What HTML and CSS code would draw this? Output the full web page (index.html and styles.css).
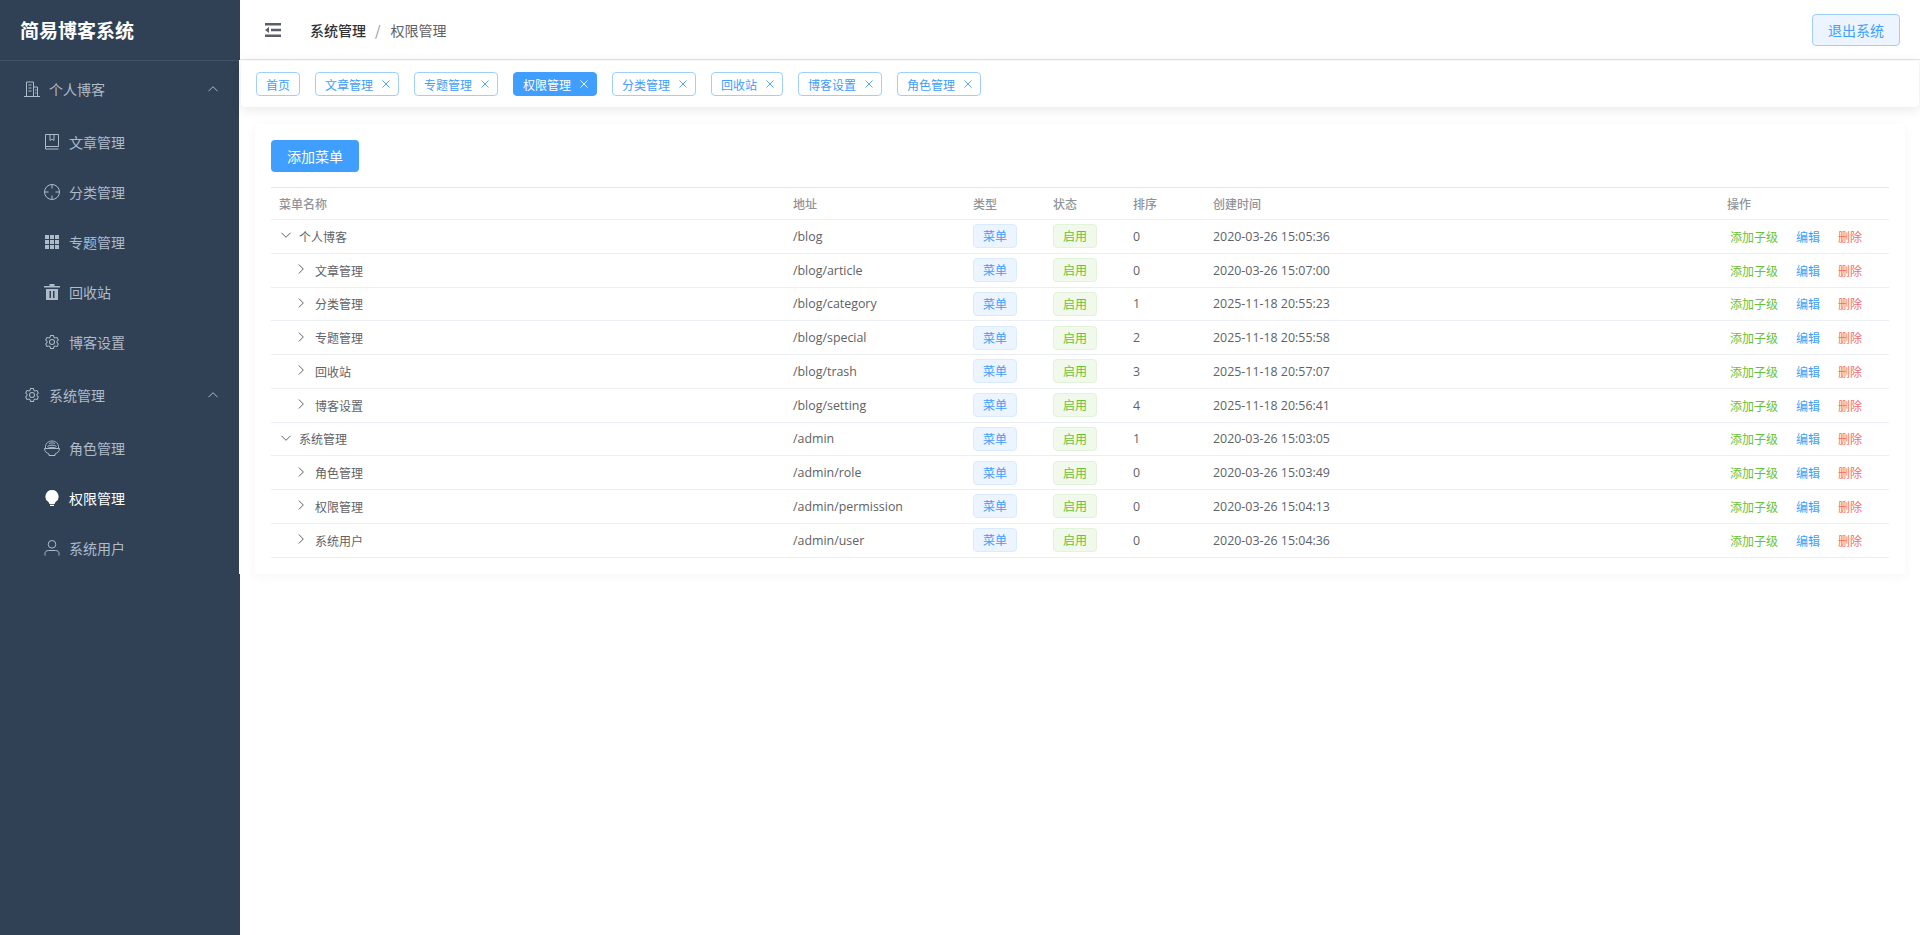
FILE: index.html
```html
<!DOCTYPE html>
<html lang="zh-CN">
<head>
  <meta charset="UTF-8">
  <meta name="viewport" content="width=device-width, initial-scale=1.0">
  <title>简易博客系统</title>
  <link rel="stylesheet" href="styles.css">
</head>
<body>
  <svg class="icon-defs" xmlns="http://www.w3.org/2000/svg">
    <symbol id="i-building" viewBox="0 0 16 16">
      <path d="M0 15.500h16M2.500 15.500V1h7v14.500M9.500 6h4v9.500M4.500 4h3M4.500 7h3M4.500 10h3M11 9h1.500M11 12h1.500" fill="none" stroke="currentColor"/>
    </symbol>
    <symbol id="i-book" viewBox="0 0 16 16">
      <path d="M1.500 12.500V.5h13v12h-13zM1.500 15h13M1.500 12.500V15M6 .5v6l2-1.500 2 1.500v-6" fill="none" stroke="currentColor"/>
    </symbol>
    <symbol id="i-aim" viewBox="0 0 16 16">
      <path d="M8 .5a7.500 7.500 0 1 0 0 15 7.500 7.500 0 0 0 0-15zM8 .5v4M8 11.500v4M.5 8h4M11.500 8h4" fill="none" stroke="currentColor"/>
    </symbol>
    <symbol id="i-grid" viewBox="0 0 16 16">
      <path d="M1 1h4v4H1zM6 1h4v4H6zM11 1h4v4h-4zM1 6h4v4H1zM6 6h4v4H6zM11 6h4v4h-4zM1 11h4v4H1zM6 11h4v4H6zM11 11h4v4h-4z" fill="currentColor"/>
    </symbol>
    <symbol id="i-trash" viewBox="0 0 16 16">
      <path fill-rule="evenodd" d="M5.500 0h5v2H16v1.500H0V2h5.500zM2 5h12v11H2zM5.500 7v7H7V7zM9 7v7h1.500V7z" fill="currentColor"/>
    </symbol>
    <symbol id="i-setting" viewBox="0 0 1024 1024">
      <path d="M600.704 64a32 32 0 0 1 30.464 22.208l35.2 109.376c14.784 7.232 28.928 15.36 42.432 24.512l112.384-24.192a32 32 0 0 1 34.432 15.36L944.32 364.8a32 32 0 0 1-4.032 37.504l-77.12 85.12a357.12 357.12 0 0 1 0 49.024l77.12 85.248a32 32 0 0 1 4.032 37.504l-88.704 153.6a32 32 0 0 1-34.432 15.296L708.8 803.904c-13.44 9.088-27.648 17.28-42.368 24.512l-35.264 109.376A32 32 0 0 1 600.704 960H423.296a32 32 0 0 1-30.464-22.208L357.696 828.48a351.616 351.616 0 0 1-42.56-24.64l-112.32 24.256a32 32 0 0 1-34.432-15.36L79.68 659.2a32 32 0 0 1 4.032-37.504l77.12-85.248a357.12 357.12 0 0 1 0-48.896l-77.12-85.248A32 32 0 0 1 79.68 364.8l88.704-153.6a32 32 0 0 1 34.432-15.296l112.32 24.256c13.568-9.152 27.776-17.408 42.56-24.64l35.2-109.312A32 32 0 0 1 423.232 64H600.64zm-23.424 64H446.720l-36.352 113.088-24.512 11.968a294.113 294.113 0 0 0-34.816 20.096l-22.656 15.360-116.224-25.088-65.280 113.152 79.680 88.192-1.920 27.136a293.120 293.120 0 0 0 0 40.192l1.920 27.136-79.808 88.192 65.344 113.152 116.224-25.024 22.656 15.296a294.113 294.113 0 0 0 34.816 20.096l24.512 11.968L446.720 896h130.688l36.480-113.152 24.448-11.904a288.282 288.282 0 0 0 34.752-20.096l22.592-15.296 116.288 25.024 65.280-113.152-79.744-88.192 1.920-27.136a293.120 293.120 0 0 0 0-40.256l-1.920-27.136 79.808-88.128-65.344-113.152-116.288 24.960-22.592-15.232a287.616 287.616 0 0 0-34.752-20.096l-24.448-11.904L577.344 128zM512 320a192 192 0 1 1 0 384 192 192 0 0 1 0-384zm0 64a128 128 0 1 0 0 256 128 128 0 0 0 0-256z" fill="currentColor"/>
    </symbol>
    <symbol id="i-bowl" viewBox="0 0 16 16">
      <path d="M.5 8.500h15c0 2.500-1.800 4.500-4.500 5.500v1.500H5V14C2.300 13 .5 11 .5 8.500zM1.500 8.500V6.500C1.500 3.500 4.500 1 8 1s6.500 2.500 6.500 5.500v2M3.500 6.500c1.500-1.800 7.500-1.800 9 0M3.500 8.500c1.500-1.500 7.500-1.500 9 0M5 3.500c1.500-.8 4.500-.8 6 0" fill="none" stroke="currentColor"/>
    </symbol>
    <symbol id="i-bulb" viewBox="0 0 16 16">
      <path d="M8 0a6.500 6.500 0 0 1 3.500 12L10.500 14h-5l-1-2A6.500 6.500 0 0 1 8 0zM6 14.800h4V16H6z" fill="currentColor"/>
    </symbol>
    <symbol id="i-user" viewBox="0 0 16 16">
      <path d="M8 .5a3.800 3.800 0 1 0 0 7.600A3.800 3.800 0 0 0 8 .5zM1 15.500v-2c0-2 1.500-3 3.500-3h7c2 0 3.500 1 3.500 3v2" fill="none" stroke="currentColor"/>
    </symbol>
    <symbol id="i-fold" viewBox="0 0 16 14">
      <path d="M0 0h16v2.500H0zM6 5.750h10v2.500H6zM0 11.500h16V14H0zM4 4v6L0 7z" fill="currentColor"/>
    </symbol>
    <symbol id="i-up" viewBox="0 0 12 12">
      <path d="M1.500 8.200 6 3.700l4.500 4.500" fill="none" stroke="currentColor"/>
    </symbol>
    <symbol id="i-down" viewBox="0 0 12 12">
      <path d="M1.500 3.800 6 8.300l4.500-4.500" fill="none" stroke="currentColor"/>
    </symbol>
    <symbol id="i-right" viewBox="0 0 12 12">
      <path d="M3.800 1.500 8.300 6l-4.500 4.500" fill="none" stroke="currentColor"/>
    </symbol>
    <symbol id="i-close" viewBox="0 0 10 10">
      <path d="M1.500 1.500l7 7M8.500 1.500l-7 7" fill="none" stroke="currentColor" stroke-width=".9"/>
    </symbol>
  </svg>

  <div class="layout">
    <aside class="sidebar">
      <div class="logo">简易博客系统</div>
      <nav class="menu">
        <div class="menu-title">
          <svg class="menu-icon"><use href="#i-building"/></svg>
          <span>个人博客</span>
          <svg class="menu-arrow"><use href="#i-up"/></svg>
        </div>
        <a class="menu-item"><svg class="menu-icon"><use href="#i-book"/></svg><span>文章管理</span></a>
        <a class="menu-item"><svg class="menu-icon"><use href="#i-aim"/></svg><span>分类管理</span></a>
        <a class="menu-item"><svg class="menu-icon"><use href="#i-grid"/></svg><span>专题管理</span></a>
        <a class="menu-item"><svg class="menu-icon"><use href="#i-trash"/></svg><span>回收站</span></a>
        <a class="menu-item"><svg class="menu-icon"><use href="#i-setting"/></svg><span>博客设置</span></a>
        <div class="menu-title">
          <svg class="menu-icon"><use href="#i-setting"/></svg>
          <span>系统管理</span>
          <svg class="menu-arrow"><use href="#i-up"/></svg>
        </div>
        <a class="menu-item"><svg class="menu-icon"><use href="#i-bowl"/></svg><span>角色管理</span></a>
        <a class="menu-item active"><svg class="menu-icon"><use href="#i-bulb"/></svg><span>权限管理</span></a>
        <a class="menu-item"><svg class="menu-icon"><use href="#i-user"/></svg><span>系统用户</span></a>
      </nav>
    </aside>

    <div class="main">
      <header class="navbar">
        <svg class="fold-icon"><use href="#i-fold"/></svg>
        <div class="breadcrumb">
          <span class="crumb-parent">系统管理</span>
          <span class="crumb-sep">/</span>
          <span class="crumb-current">权限管理</span>
        </div>
        <button class="logout-button">退出系统</button>
      </header>

      <div class="main-body">
        <div class="tabs">
          <span class="tab">首页</span>
          <span class="tab">文章管理<svg class="tab-close"><use href="#i-close"/></svg></span>
          <span class="tab">专题管理<svg class="tab-close"><use href="#i-close"/></svg></span>
          <span class="tab active">权限管理<svg class="tab-close"><use href="#i-close"/></svg></span>
          <span class="tab">分类管理<svg class="tab-close"><use href="#i-close"/></svg></span>
          <span class="tab">回收站<svg class="tab-close"><use href="#i-close"/></svg></span>
          <span class="tab">博客设置<svg class="tab-close"><use href="#i-close"/></svg></span>
          <span class="tab">角色管理<svg class="tab-close"><use href="#i-close"/></svg></span>
        </div>

        <section class="card">
          <button class="add-button">添加菜单</button>
          <table class="menu-table">
            <thead>
              <tr>
                <th class="col-name">菜单名称</th>
                <th class="col-path">地址</th>
                <th class="col-type">类型</th>
                <th class="col-status">状态</th>
                <th class="col-sort">排序</th>
                <th class="col-time">创建时间</th>
                <th class="col-ops">操作</th>
              </tr>
            </thead>
            <tbody>
              <tr>
                <td><div class="tree-cell"><svg class="tree-arrow"><use href="#i-down"/></svg>个人博客</div></td>
                <td class="latin">/blog</td>
                <td><span class="tag">菜单</span></td>
                <td><span class="tag green">启用</span></td>
                <td class="latin">0</td>
                <td class="latin">2020-03-26 15:05:36</td>
                <td><div class="ops"><a class="op-add">添加子级</a><a class="op-edit">编辑</a><a class="op-del">删除</a></div></td>
              </tr>
              <tr>
                <td><div class="tree-cell child"><svg class="tree-arrow"><use href="#i-right"/></svg>文章管理</div></td>
                <td class="latin">/blog/article</td>
                <td><span class="tag">菜单</span></td>
                <td><span class="tag green">启用</span></td>
                <td class="latin">0</td>
                <td class="latin">2020-03-26 15:07:00</td>
                <td><div class="ops"><a class="op-add">添加子级</a><a class="op-edit">编辑</a><a class="op-del">删除</a></div></td>
              </tr>
              <tr>
                <td><div class="tree-cell child"><svg class="tree-arrow"><use href="#i-right"/></svg>分类管理</div></td>
                <td class="latin">/blog/category</td>
                <td><span class="tag">菜单</span></td>
                <td><span class="tag green">启用</span></td>
                <td class="latin">1</td>
                <td class="latin">2025-11-18 20:55:23</td>
                <td><div class="ops"><a class="op-add">添加子级</a><a class="op-edit">编辑</a><a class="op-del">删除</a></div></td>
              </tr>
              <tr>
                <td><div class="tree-cell child"><svg class="tree-arrow"><use href="#i-right"/></svg>专题管理</div></td>
                <td class="latin">/blog/special</td>
                <td><span class="tag">菜单</span></td>
                <td><span class="tag green">启用</span></td>
                <td class="latin">2</td>
                <td class="latin">2025-11-18 20:55:58</td>
                <td><div class="ops"><a class="op-add">添加子级</a><a class="op-edit">编辑</a><a class="op-del">删除</a></div></td>
              </tr>
              <tr>
                <td><div class="tree-cell child"><svg class="tree-arrow"><use href="#i-right"/></svg>回收站</div></td>
                <td class="latin">/blog/trash</td>
                <td><span class="tag">菜单</span></td>
                <td><span class="tag green">启用</span></td>
                <td class="latin">3</td>
                <td class="latin">2025-11-18 20:57:07</td>
                <td><div class="ops"><a class="op-add">添加子级</a><a class="op-edit">编辑</a><a class="op-del">删除</a></div></td>
              </tr>
              <tr>
                <td><div class="tree-cell child"><svg class="tree-arrow"><use href="#i-right"/></svg>博客设置</div></td>
                <td class="latin">/blog/setting</td>
                <td><span class="tag">菜单</span></td>
                <td><span class="tag green">启用</span></td>
                <td class="latin">4</td>
                <td class="latin">2025-11-18 20:56:41</td>
                <td><div class="ops"><a class="op-add">添加子级</a><a class="op-edit">编辑</a><a class="op-del">删除</a></div></td>
              </tr>
              <tr>
                <td><div class="tree-cell"><svg class="tree-arrow"><use href="#i-down"/></svg>系统管理</div></td>
                <td class="latin">/admin</td>
                <td><span class="tag">菜单</span></td>
                <td><span class="tag green">启用</span></td>
                <td class="latin">1</td>
                <td class="latin">2020-03-26 15:03:05</td>
                <td><div class="ops"><a class="op-add">添加子级</a><a class="op-edit">编辑</a><a class="op-del">删除</a></div></td>
              </tr>
              <tr>
                <td><div class="tree-cell child"><svg class="tree-arrow"><use href="#i-right"/></svg>角色管理</div></td>
                <td class="latin">/admin/role</td>
                <td><span class="tag">菜单</span></td>
                <td><span class="tag green">启用</span></td>
                <td class="latin">0</td>
                <td class="latin">2020-03-26 15:03:49</td>
                <td><div class="ops"><a class="op-add">添加子级</a><a class="op-edit">编辑</a><a class="op-del">删除</a></div></td>
              </tr>
              <tr>
                <td><div class="tree-cell child"><svg class="tree-arrow"><use href="#i-right"/></svg>权限管理</div></td>
                <td class="latin">/admin/permission</td>
                <td><span class="tag">菜单</span></td>
                <td><span class="tag green">启用</span></td>
                <td class="latin">0</td>
                <td class="latin">2020-03-26 15:04:13</td>
                <td><div class="ops"><a class="op-add">添加子级</a><a class="op-edit">编辑</a><a class="op-del">删除</a></div></td>
              </tr>
              <tr>
                <td><div class="tree-cell child"><svg class="tree-arrow"><use href="#i-right"/></svg>系统用户</div></td>
                <td class="latin">/admin/user</td>
                <td><span class="tag">菜单</span></td>
                <td><span class="tag green">启用</span></td>
                <td class="latin">0</td>
                <td class="latin">2020-03-26 15:04:36</td>
                <td><div class="ops"><a class="op-add">添加子级</a><a class="op-edit">编辑</a><a class="op-del">删除</a></div></td>
              </tr>
            </tbody>
          </table>
        </section>
      </div>
    </div>
  </div>
</body>
</html>
```

FILE: styles.css
```css
* {
  margin: 0;
  padding: 0;
  box-sizing: border-box;
}

body {
  font-family: "Noto Sans CJK SC", "Noto Sans", sans-serif;
  background: #ffffff;
  color: #606266;
  overflow: hidden;
}

.icon-defs {
  display: none;
}

.layout {
  display: flex;
  height: 935px;
}

/* sidebar */
.sidebar {
  width: 240px;
  flex-shrink: 0;
  background: #304156;
  color: #aebbc9;
}

.logo {
  height: 61px;
  padding-left: 20px;
  line-height: 60px;
  font-size: 19px;
  font-weight: 700;
  color: #ffffff;
  border-bottom: 1px solid #435263;
}

.menu-title,
.menu-item {
  display: flex;
  align-items: center;
  font-size: 14px;
}

.menu-title {
  height: 56px;
  padding-left: 24px;
}

.menu-item {
  height: 50px;
  padding-left: 44px;
}

.menu-item.active {
  color: #ffffff;
}

.menu-icon {
  width: 16px;
  height: 16px;
  margin-right: 9px;
  flex-shrink: 0;
}

.menu-arrow {
  width: 12px;
  height: 12px;
  margin-left: auto;
  margin-right: 21px;
}

/* top bar */
.main {
  flex: 1;
  min-width: 0;
}

.navbar {
  display: flex;
  align-items: center;
  height: 60px;
  padding-left: 25px;
  padding-right: 20px;
  border-bottom: 1px solid #e4e5e9;
}

.fold-icon {
  width: 16px;
  height: 14px;
  color: #5a5e66;
  margin-right: 29px;
}

.breadcrumb {
  display: flex;
  font-size: 14px;
}

.crumb-parent {
  font-weight: 500;
  color: #303133;
}

.crumb-sep {
  margin: 0 10px 0 9px;
  color: #909399;
}

.crumb-current {
  color: #606266;
}

.logout-button {
  margin-left: auto;
  width: 88px;
  height: 32px;
  font: inherit;
  font-size: 14px;
  color: #409eff;
  background: #ecf5ff;
  border: 1px solid #a0cfff;
  border-radius: 4px;
}

/* tabs + content */
.main-body {
  position: relative;
  margin-left: -1px;
  padding-top: 1px;
  background: #ffffff;
}

.tabs {
  display: flex;
  align-items: center;
  gap: 15px;
  height: 46px;
  margin-left: 2px;
  margin-right: 1px;
  padding-left: 15px;
  background: #ffffff;
  border-radius: 4px;
  box-shadow: 0 2px 12px rgba(0, 0, 0, 0.1);
}

.tab {
  display: inline-flex;
  align-items: center;
  height: 24px;
  padding: 0 9px;
  font-size: 12px;
  color: #409eff;
  background: #ffffff;
  border: 1px solid #a0cfff;
  border-radius: 4px;
}

.tab.active {
  color: #ffffff;
  background: #409eff;
  border-color: #409eff;
}

.tab-close {
  width: 10px;
  height: 10px;
  margin: 0 -2px 0 8px;
}

.card {
  margin: 17px 15px 0 16px;
  padding: 16px;
  background: #ffffff;
  border-radius: 4px;
  box-shadow: 0 2px 12px rgba(0, 0, 0, 0.04);
}

.add-button {
  display: block;
  width: 88px;
  height: 32px;
  font: inherit;
  font-size: 14px;
  color: #ffffff;
  background: #409eff;
  border: none;
  border-radius: 4px;
}

/* table */
.menu-table {
  width: 100%;
  margin-top: 15px;
  border-collapse: separate;
  border-spacing: 0;
  table-layout: fixed;
  font-size: 12px;
}

.menu-table th,
.menu-table td {
  padding: 0 8px;
  text-align: left;
  border-bottom: 1px solid #ebeef5;
}

.menu-table th {
  height: 33px;
  font-weight: 500;
  color: #909399;
  border-top: 1px solid #e4e7ed;
}

.menu-table td {
  height: 33.75px;
}

.col-name { width: 514px; }
.col-path { width: 180px; }
.col-type,
.col-status,
.col-sort { width: 80px; }
.col-ops { width: 170px; }

.latin {
  font-family: "Open Sans", "Noto Sans CJK SC", sans-serif;
  font-size: 12.4px;
}

.tree-cell {
  display: flex;
  align-items: center;
  padding-left: 1px;
}

.tree-cell.child {
  padding-left: 16px;
}

.tree-arrow {
  width: 12px;
  height: 12px;
  margin-right: 7px;
  margin-top: -2px;
  color: #606266;
}

.tree-cell.child .tree-arrow {
  margin-right: 8px;
}

.tag {
  display: inline-block;
  width: 44px;
  height: 24px;
  line-height: 22px;
  text-align: center;
  font-size: 12px;
  color: #409eff;
  background: #ecf5ff;
  border: 1px solid #d9ecff;
  border-radius: 4px;
  vertical-align: middle;
}

.tag.green {
  color: #67c23a;
  background: #f0f9eb;
  border-color: #e1f3d8;
}

.ops {
  display: flex;
  gap: 18px;
  padding-left: 3px;
}

.op-add { color: #67c23a; }
.op-edit { color: #409eff; }
.op-del { color: #f56c6c; }
```
